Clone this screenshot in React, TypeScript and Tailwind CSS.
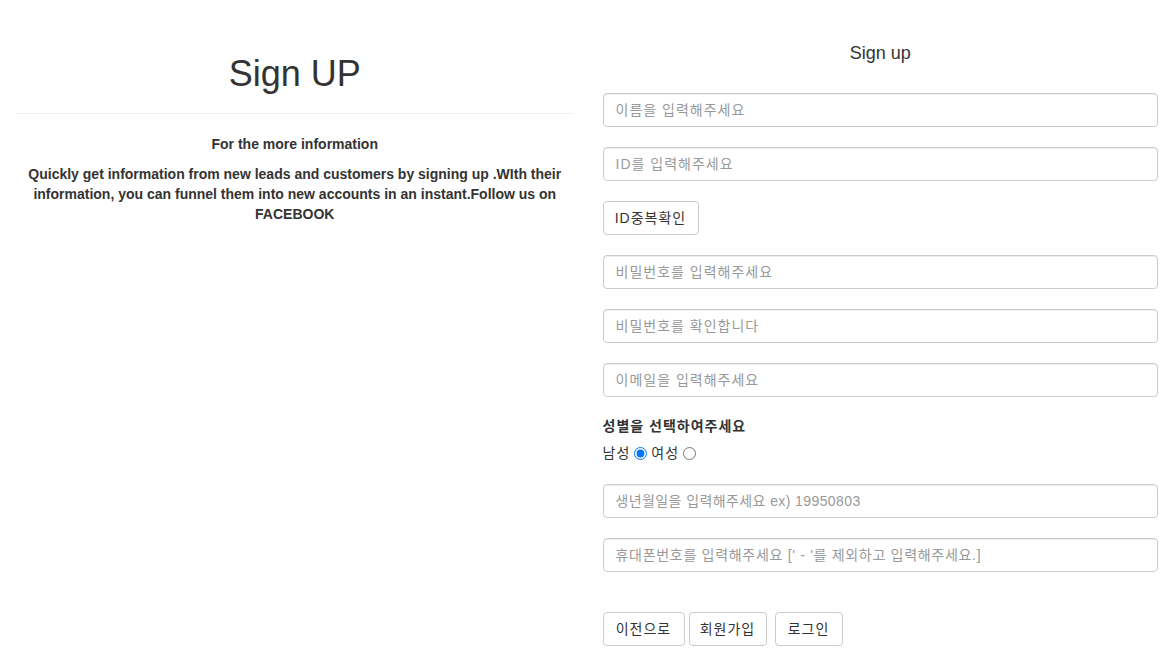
import React from "react";

const font = { fontFamily: '"Liberation Sans", Arial, "Noto Sans CJK KR", sans-serif' };

function Field({ placeholder, track = "tracking-[1px]" }: { placeholder: string; track?: string }) {
  return (
    <input
      type="text"
      placeholder={placeholder}
      className={`block w-full h-[34px] px-3 text-[14px] text-[#555] border border-[#ccc] rounded-[4px] shadow-[inset_0_1px_1px_rgba(0,0,0,0.075)] placeholder:text-[#999] outline-none bg-white ${track}`}
      style={font}
    />
  );
}

function Btn({ children, w }: { children: React.ReactNode; w: string }) {
  return (
    <button
      type="button"
      className={`h-[34px] ${w} text-[14px] tracking-[1px] text-[#333] bg-white border border-[#ccc] rounded-[4px] flex items-center justify-center`}
      style={font}
    >
      {children}
    </button>
  );
}

export default function App() {
  return (
    <div className="w-[1166px] h-[664px] bg-white text-[#333] overflow-hidden" style={font}>
      <div className="flex pl-[17px] pr-[8px] gap-[30px]">
        {/* Left column */}
        <div className="flex-1 basis-0 min-w-0">
          <h1 className="pt-[54px] text-[36px] leading-[40px] text-center font-normal text-[#333]">Sign UP</h1>
          <div className="mt-[19px] border-t border-[#eee]" />
          <p className="mt-[20px] text-[14px] leading-[20px] font-bold text-center">For the more information</p>
          <p className="mt-[10px] text-[14px] leading-[20px] font-bold text-center">
            Quickly get information from new leads and customers by signing up .WIth their information, you can funnel them into new accounts in an instant.Follow us on FACEBOOK
          </p>
        </div>

        {/* Right column */}
        <div className="flex-1 basis-0 min-w-0">
          <div className="pt-[43px] text-[18px] leading-[20px] text-center">Sign up</div>
          <div className="mt-[30px] flex flex-col gap-[20px]">
            <Field placeholder="이름을 입력해주세요" />
            <Field placeholder="ID를 입력해주세요" />
            <div>
              <Btn w="w-[96px]">ID중복확인</Btn>
            </div>
            <Field placeholder="비밀번호를 입력해주세요" />
            <Field placeholder="비밀번호를 확인합니다" />
            <Field placeholder="이메일을 입력해주세요" />
          </div>
          <div className="mt-[19px] text-[14px] leading-[20px] font-bold tracking-[1px]">성별을 선택하여주세요</div>
          <div className="mt-[7px] flex items-center text-[14px] leading-[20px] h-[20px] tracking-[1px]">
            <span>남성</span>
            <input type="radio" name="gender" defaultChecked className="ml-[4px] mr-[4px] w-[13px] h-[13px]" />
            <span>여성</span>
            <input type="radio" name="gender" className="ml-[4px] w-[13px] h-[13px]" />
          </div>
          <div className="mt-[21px] flex flex-col gap-[20px]">
            <Field placeholder="생년월일을 입력해주세요 ex) 19950803" track="tracking-[0.4px]" />
            <Field placeholder="휴대폰번호를 입력해주세요 [' - '를 제외하고 입력해주세요.]" track="tracking-[0.7px]" />
          </div>
          <div className="mt-[40px] flex">
            <Btn w="w-[82px]">이전으로</Btn>
            <div className="w-[4px]" />
            <Btn w="w-[78px]">회원가입</Btn>
            <div className="w-[8px]" />
            <Btn w="w-[68px]">로그인</Btn>
          </div>
        </div>
      </div>
    </div>
  );
}
